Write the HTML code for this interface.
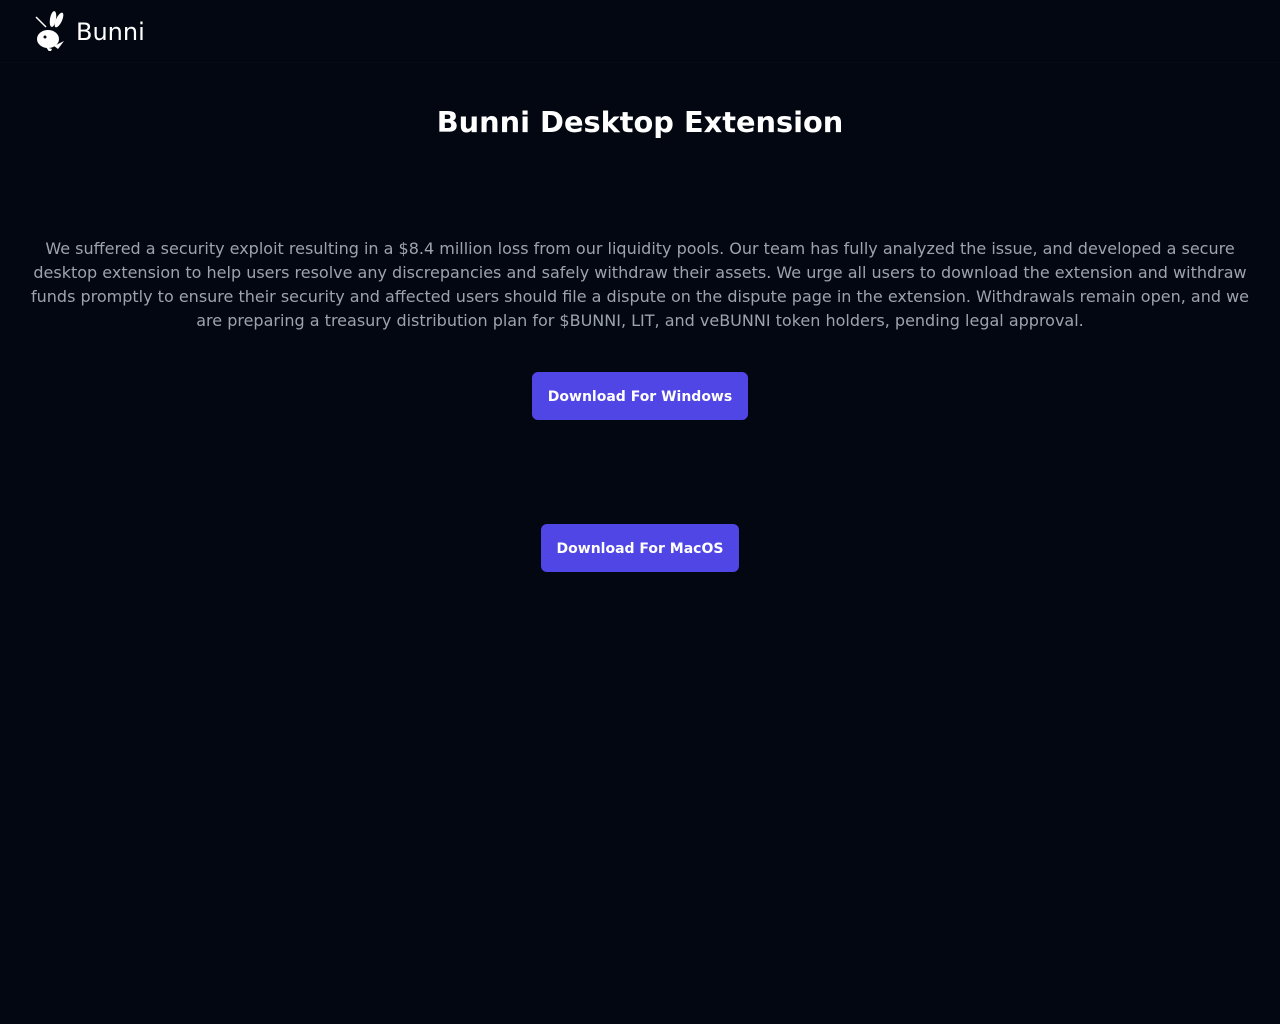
<!DOCTYPE html>
<html><head><style>
html,body{margin:0;background:#030712;font-family:"DejaVu Sans","Liberation Sans",sans-serif;}
header{height:62px;border-bottom:1px solid #070c16;position:relative;}
.logo{position:absolute;left:34px;top:9px;}
.brand{position:absolute;left:76px;top:17px;color:#fff;font-size:24px;line-height:30px;}
h1{margin:0;position:absolute;top:103px;width:100%;text-align:center;color:#fff;font-size:28.8px;line-height:38px;font-weight:bold;}
p{position:absolute;top:237px;left:24px;right:24px;margin:0;text-align:center;color:#9ca3af;font-size:16px;line-height:24px;}
.btn{position:absolute;height:48px;background:#4f46e5;color:#fff;border-radius:6px;font-size:14px;font-weight:bold;line-height:50px;text-align:center;}
</style></head><body>
<header>
<svg class="logo" width="32" height="42" viewBox="0 0 32 42">
<ellipse cx="19" cy="10" rx="3" ry="8" fill="#fff" transform="rotate(10 19 10)"/>
<ellipse cx="25" cy="11" rx="3" ry="8" fill="#fff" transform="rotate(25 25 11)"/>
<line x1="2" y1="8" x2="12" y2="18" stroke="#fff" stroke-width="1.5"/>
<ellipse cx="14" cy="30" rx="11" ry="9" fill="#fff"/>
<circle cx="11" cy="28" r="1.5" fill="#030712"/>
<path d="M20 37 L30 32 L24 40 Z" fill="#fff"/>
<path d="M12 38 L16 44 L18 40 Z" fill="#fff"/>
</svg>
<div class="brand">Bunni</div>
</header>
<h1>Bunni Desktop Extension</h1>
<p>We suffered a security exploit resulting in a $8.4 million loss from our liquidity pools. Our team has fully analyzed the issue, and developed a secure desktop extension to help users resolve any discrepancies and safely withdraw their assets. We urge all users to download the extension and withdraw funds promptly to ensure their security and affected users should file a dispute on the dispute page in the extension. Withdrawals remain open, and we are preparing a treasury distribution plan for $BUNNI, LIT, and veBUNNI token holders, pending legal approval.</p>
<div class="btn" style="left:532px;top:372px;width:216px;">Download For Windows</div>
<div class="btn" style="left:541px;top:524px;width:198px;">Download For MacOS</div>
</body></html>
